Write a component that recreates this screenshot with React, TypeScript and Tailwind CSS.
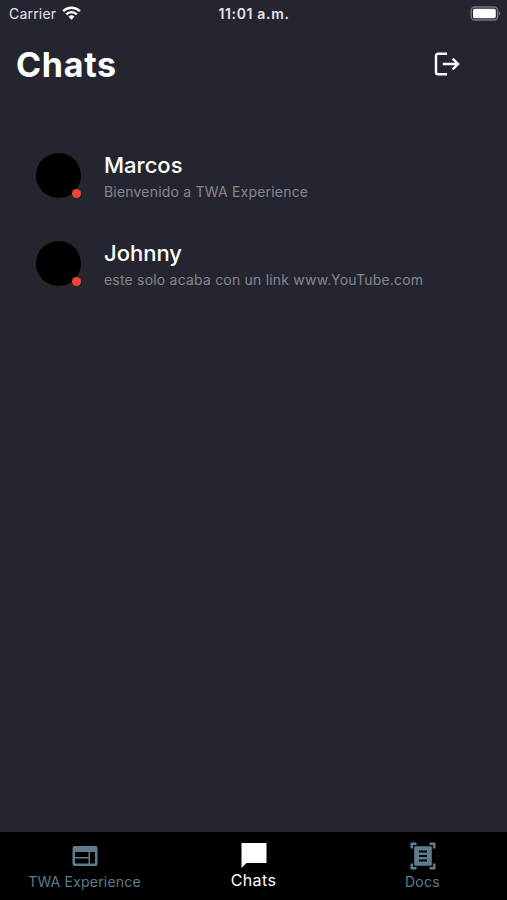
type Chat = {
  name: string;
  message: string;
};

const chats: Chat[] = [
  { name: "Marcos", message: "Bienvenido a TWA Experience" },
  { name: "Johnny", message: "este solo acaba con un link www.YouTube.com" },
];

const StatusBar = () => {
  return (
    <div className="grid h-7 shrink-0 grid-cols-3 items-center pr-[6px] pl-[9px] text-[#e4e4ea]">
      <div className="flex items-center gap-[6px]">
        <span className="text-[14px] leading-5 tracking-[0.2px]">Carrier</span>
        <svg width="19" height="14" viewBox="0 0 19 14" fill="none" className="mb-[2px]">
          <path d="M1.1 5.2a12 12 0 0 1 16.8 0" stroke="white" strokeWidth="2.5" />
          <path d="M4.2 8.3a7.5 7.5 0 0 1 10.6 0" stroke="white" strokeWidth="2.4" />
          <path d="M9.5 13.8 6.5 10.8a4.3 4.3 0 0 1 6 0z" fill="white" />
        </svg>
      </div>
      <span className="-ml-[2px] text-center text-[14px] leading-5 font-semibold tracking-[0.65px] whitespace-nowrap">
        11:01 a.m.
      </span>
      <svg width="31" height="15" viewBox="0 0 31 15" fill="none" className="mb-px justify-self-end">
        <rect x="1.2" y="1" width="26.4" height="13" rx="3.5" stroke="#777780" strokeWidth="1.4" />
        <rect x="3" y="2.8" width="22.8" height="9.4" rx="1.8" fill="white" />
        <path d="M29 5.3c1.8.8 1.8 3.6 0 4.4z" fill="#777780" />
      </svg>
    </div>
  );
};

const Header = () => {
  return (
    <header className="flex h-[73px] shrink-0 items-center justify-between pr-[47px] pl-4 text-white">
      <h1 className="text-[34px] leading-10 font-bold tracking-[0.7px]">Chats</h1>
      <button type="button" aria-label="Salir" className="mb-[2px]">
        <svg width="26" height="24" viewBox="0 0 26 24" fill="none" stroke="white" strokeWidth="2.4">
          <path d="M13 1.8H4.2Q2 1.800 2 3.800V20.200Q2 22.200 4.200 22.200H13" />
          <path d="M8.8 12H24M18.6 6.6 24 12l-5.4 5.4" />
        </svg>
      </button>
    </header>
  );
};

const ChatRow = ({ name, message }: Chat) => {
  return (
    <li className="flex h-[88px] items-center gap-[23px] pl-9">
      <div className="relative size-[45px] shrink-0 rounded-full bg-black">
        <span className="absolute right-0 bottom-0 size-[9px] rounded-full bg-[#f44336]" />
      </div>
      <div className="pt-[5px] whitespace-nowrap">
        <p className="text-[22px] leading-7 font-medium text-white">{name}</p>
        <p className="text-[14px] leading-[25px] tracking-[0.2px] text-[#85858e]">{message}</p>
      </div>
    </li>
  );
};

const WebIcon = () => (
  <svg width="26" height="20" viewBox="0 0 26 20" fill="#5f7d8b">
    <path
      fillRule="evenodd"
      d="M2.5 0h21Q25.500 0 25.500 2v16q0 2-2 2h-21q-2 0-2-2V2q0-2 2-2zM3 6v5h13.500V6zM3 12.500v5h13.500v-5zM18 6v11.500H23V6z"
    />
  </svg>
);

const BubbleIcon = () => (
  <svg width="26" height="25" viewBox="0 0 26 25" fill="white">
    <path d="M.5 0h25v20h-20l-5 5z" />
  </svg>
);

const ScannerIcon = () => (
  <svg width="26" height="28" viewBox="0 0 26 28" fill="#5f7d8b">
    <path d="M.5.5h6V3H3v3.5H.5zM19.5.5h6v6H23V3h-3.5zM.5 21.5H3V25h3.5v2.5h-6zM23 21.5h2.500v6h-6V25H23z" />
    <path
      fillRule="evenodd"
      d="M5 4.300h16q.8 0 .8.800v17.800q0 .8-.8.800H5q-.8 0-.8-.8V5.100q0-.8.8-.8zM9 8.500v2h8v-2zM9 13v2h8v-2zM9 17.500v2h8v-2z"
    />
  </svg>
);

const TabBar = () => {
  return (
    <nav className="grid h-[68px] shrink-0 grid-cols-3 bg-black text-[#5f7d8b]">
      <a className="flex flex-col items-center">
        <div className="flex h-12 items-center">
          <WebIcon />
        </div>
        <span className="-mt-[8px] text-[14px] leading-5 tracking-[0.2px]">TWA Experience</span>
      </a>
      <a className="flex flex-col items-center text-white">
        <div className="flex h-[46px] items-center">
          <BubbleIcon />
        </div>
        <span className="-mt-[8px] text-[16px] leading-5 tracking-[0.4px]">Chats</span>
      </a>
      <a className="flex flex-col items-center">
        <div className="flex h-12 items-center">
          <ScannerIcon />
        </div>
        <span className="-mt-[8px] text-[14px] leading-5 tracking-[0.3px]">Docs</span>
      </a>
    </nav>
  );
};

const App = () => {
  return (
    <main className="flex h-[900px] w-[507px] flex-col overflow-hidden bg-[#252530] font-['Inter',sans-serif]">
      <StatusBar />
      <Header />
      <ul className="mt-[30px] flex-1">
        {chats.map((chat) => (
          <ChatRow key={chat.name} {...chat} />
        ))}
      </ul>
      <TabBar />
    </main>
  );
};

export default App;
